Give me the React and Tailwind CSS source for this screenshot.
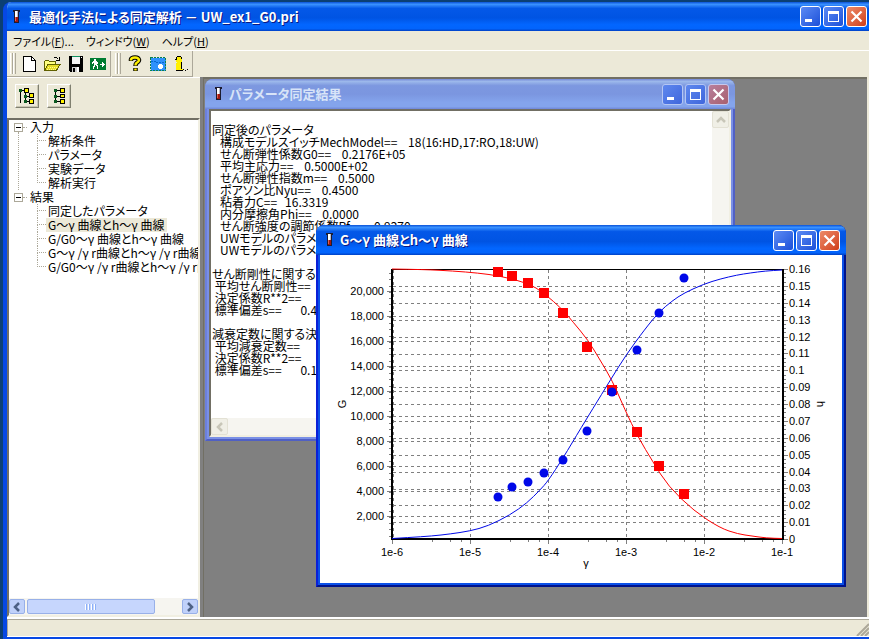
import React, { useState } from 'react';

const menus = [
  { label: 'ファイル', hotkey: 'F', suffix: '...' },
  { label: 'ウィンドウ', hotkey: 'W', suffix: '' },
  { label: 'ヘルプ', hotkey: 'H', suffix: '' },
];

const treeData = [
  { title: '入力', children: ['解析条件', 'パラメータ', '実験データ', '解析実行'] },
  {
    title: '結果',
    children: [
      '同定したパラメータ',
      'G～γ 曲線とh～γ 曲線',
      'G/G0～γ 曲線とh～γ 曲線',
      'G～γ /γ r曲線とh～γ /γ r曲線',
      'G/G0～γ /γ r曲線とh～γ /γ r曲線',
    ],
  },
];

const resultText = `
同定後のパラメータ
   構成モデルスイッチMechModel==    18(16:HD,17:RO,18:UW)
   せん断弾性係数G0==    0.2176E+05
   平均主応力==    0.5000E+02
   せん断弾性指数m==    0.5000
   ポアソン比Nyu==    0.4500
   粘着力C==   16.3319
   内分摩擦角Phi==    0.0000
   せん断強度の調節係数Rf==    0.9270
   UWモデルのパラメータ
   UWモデルのパラメータ

せん断剛性に関する決定係数
 平均せん断剛性==
 決定係数R**2==
 標準偏差s==       0.4

減衰定数に関する決定係数
 平均減衰定数==
 決定係数R**2==
 標準偏差s==       0.1`;

// Points are in the coordinates of the chart's viewBox
const redPoints = [[178, 17], [192, 21], [208, 28], [224, 38], [243, 58], [267, 92], [292, 135], [317, 177], [339, 211], [364, 239]];
const bluePoints = [[178, 242], [192, 232], [208, 227], [224, 218], [243, 205], [267, 176], [292, 137], [317, 95], [339, 58], [364, 23]];
const redCurve = [[72, 14], [105, 14.5], [133, 16], [158, 18], [180, 21], [208, 28], [224, 38], [243, 55], [253, 67], [268, 85], [280, 105], [292, 125], [305, 155], [318, 182], [333, 207], [348, 231], [374, 256], [400, 273], [418, 279], [432, 281], [446, 283], [462, 283.5]];
const blueCurve = [[72, 283.5], [89, 282.5], [112, 281], [130, 279], [150, 276], [168, 271], [190, 260], [207, 248], [220, 235], [228, 226], [243, 203], [252, 188], [261, 173], [272, 155], [291, 124], [306, 100], [325, 74], [339, 57], [352, 46], [364, 38], [384, 29], [400, 24], [417, 20], [430, 18], [445, 16], [462, 15]];

// Smooth curve: quadratic segments through the middle of each pair of points
const toPath = (list) => {
  const last = list[list.length - 1];
  const middle = list.slice(1, -1).map(([x, y], i) => {
    const [nextX, nextY] = list[i + 2];
    return `Q${x} ${y} ${(x + nextX) / 2} ${(y + nextY) / 2}`;
  });
  return `M${list[0].join(' ')}${middle.join('')}L${last.join(' ')}`;
};

const range = (n) => Array.from({ length: n }, (_, i) => i);

const TubeIcon = () => (
  <svg width="8" height="16" viewBox="0 0 8 16" shapeRendering="crispEdges" className="shrink-0">
    <path d="M0 1h7v2h-1v11h-5v-11h-1z" fill="#1c1c30" />
    <path d="M2 2h2v6h-2z" fill="#fff" />
    <path d="M4 2h1v6h-1z" fill="#b9b9c8" />
    <path d="M2 8h3v5h-3z" fill="#a01810" />
    <path d="M2 8h1v4h-1z" fill="#e06050" />
  </svg>
);

const NewIcon = () => (
  <svg width="16" height="16" viewBox="0 0 16 16" shapeRendering="crispEdges">
    <path d="M1.5 .5h8l4 4v11h-12z" fill="#fff" stroke="#000" />
    <path d="M9.5 .5v4h4" fill="none" stroke="#000" />
  </svg>
);

const OpenIcon = () => (
  <svg width="17" height="16" viewBox="0 0 17 16" shapeRendering="crispEdges">
    <path d="M.5 14.5v-9l1-1h3l1 1h6v3" fill="#ffff80" stroke="#606000" />
    <path d="M.5 14.5l3.5-6h12l-3.5 6z" fill="#e6dc28" stroke="#606000" />
    <path d="M4 11.5h9M3 13.5h9" stroke="#fffb90" strokeDasharray="1 1" />
    <path d="M9.5 2.5l1-1h2l2 2M15.5 1v3.500h-3.500" fill="none" stroke="#000" />
  </svg>
);

const SaveIcon = () => (
  <svg width="16" height="16" viewBox="0 0 16 16" shapeRendering="crispEdges">
    <path d="M1 0h14v16h-13l-1-1z" fill="#000" />
    <path d="M4 0h8v8h-8z" fill="#f4f4f4" />
    <path d="M4 0h8v1h-8z" fill="#109060" />
    <path d="M13 1h1v1h-1z" fill="#fff" />
    <path d="M4 11h7v5h-7z" fill="#d0d0d0" />
    <path d="M5 12h2v4h-2z" fill="#000" />
    <path d="M9 11h2v5h-2z" fill="#fff" />
  </svg>
);

const ExitIcon = () => (
  <svg width="17" height="16" viewBox="0 0 17 16" shapeRendering="crispEdges">
    <path d="M0 2h16v12h-16z" fill="#007c30" />
    <path d="M4 3h2v2h-2zM3 5h4v1h1v2h-1v1h1v4h-1v-3h-1v-1h-1v2h-1v2h-1v-3h1v-3h-1v1h-1v-2h1z" fill="#fff" />
    <path d="M10 8h2v-2h1v1h1v1h1v1h-1v1h-1v1h-1v-2h-2z" fill="#fff" />
  </svg>
);

const HelpIcon = () => (
  <svg width="16" height="17" viewBox="0 0 16 17">
    <path d="M4 6V4.500Q4.500 2.500 8 2.500t4 2.500Q12 6.500 9.500 8 8.500 8.800 8.500 11M8.500 13v3" fill="none" stroke="#000" strokeWidth="4.500" />
    <path d="M4 5.500V4.500Q4.500 2.500 8 2.500t4 2.500Q12 6.500 9.500 8 8.500 8.800 8.500 10.500M8.500 13.500v2" fill="none" stroke="#fff000" strokeWidth="2.500" />
  </svg>
);

const MapIcon = () => (
  <svg width="16" height="16" viewBox="0 0 16 16" shapeRendering="crispEdges">
    <path d="M.5 1.500h15v13h-15z" fill="#2f92fc" stroke="#088050" strokeDasharray="2 1" />
    <path d="M1 5.500h5M6 6.500h9" stroke="#0868d0" strokeDasharray="2 1" />
    <path d="M10 8h2v1h1v3h-1v1h-3v-1h-1v-3h1v-1z" fill="#fff" />
  </svg>
);

const GuideIcon = () => (
  <svg width="16" height="16" viewBox="0 0 16 16" shapeRendering="crispEdges">
    <path d="M4 1h4v1h1v4h-1v7h2v1h-7v-7h1v-1h-1v-3h1z" fill="#fff000" />
    <path d="M4 0h4v1h-4zM8 1h1v2h-1zM3 1h1v2h-1zM2 3h2v1h-2zM3 14h7v1h-7zM8 6h1v7h-1zM10 13h1v1h-1zM12 14h1v1h-1zM14 13h1v1h-1z" fill="#000" />
  </svg>
);

const TreeIcon = ({ indent }) => (
  <svg width="16" height="16" viewBox="0 0 16 16" shapeRendering="crispEdges">
    {indent ? (
      <>
        <path d="M1.500 3v12M1 2.500h4M6.500 4v10M6 8.500h4M6 13.500h4" fill="none" stroke="#000" />
        <path d="M0 1h3v3h-3zM5 7h3v3h-3zM5 12h3v3h-3z" fill="#0a5a20" />
        <path d="M5.500 .5h4v4h-4zM10.500 5.500h4v4h-4zM10.500 11.500h4v4h-4z" fill="#fff000" stroke="#000" />
      </>
    ) : (
      <>
        <path d="M4.500 2v12M4 2.500h5M4 8.500h5M4 13.500h5" fill="none" stroke="#000" />
        <path d="M3 1h3v3h-3zM3 7h3v3h-3zM3 12h3v3h-3z" fill="#0a5a20" />
        <path d="M9.500 .5h4v4h-4zM9.500 6.500h4v3h-4zM9.500 11.500h4v4h-4z" fill="#fff000" stroke="#000" />
      </>
    )}
  </svg>
);

const Chevron = ({ dir, color }) => {
  const paths = { left: 'M7 1L3 5l4 4', right: 'M3 1l4 4-4 4', up: 'M1 7l4-4 4 4' };
  return (
    <svg width="10" height="10" viewBox="0 0 10 10">
      <path d={paths[dir]} fill="none" stroke={color} strokeWidth="2.500" />
    </svg>
  );
};

const CaptionButtons = ({ active }) => {
  const blue = active
    ? 'border-white bg-linear-to-br from-[#5c8af4] to-[#1c4fd8]'
    : 'border-[#b4c6f4] bg-linear-to-br from-[#5f88ee] to-[#3f66dc]';
  const red = active
    ? 'border-white bg-linear-to-br from-[#ec8a68] to-[#d03c14]'
    : 'border-[#c8c8ec] bg-linear-to-br from-[#b87f9c] to-[#a8606e]';
  const base = 'flex size-[21px] items-center justify-center rounded-[3px] border';
  return (
    <div className="flex gap-[2px]">
      <button aria-label="最小化" className={`${base} ${blue}`}>
        <svg width="13" height="13" shapeRendering="crispEdges"><path d="M1 9h7v3h-7z" fill="#fff" /></svg>
      </button>
      <button aria-label="最大化" className={`${base} ${blue}`}>
        <svg width="13" height="13" shapeRendering="crispEdges"><path d="M1 1h11v11h-11zM2 4v7h9v-7z" fill="#fff" fillRule="evenodd" /></svg>
      </button>
      <button aria-label="閉じる" className={`${base} ${red}`}>
        <svg width="13" height="13"><path d="M1.500 1.500l10 10M11.500 1.500l-10 10" stroke="#fff" strokeWidth="2.200" /></svg>
      </button>
    </div>
  );
};

const ChildWindow = ({ title, active, className, children }) => (
  <section
    className={`absolute flex h-[362px] w-[530px] flex-col rounded-t-lg border-x-2 border-b-2 px-[2px] pb-[2px] ${
      active
        ? 'border-l-[#0a20d8] border-r-[#00138c] border-b-[#00138c] bg-[#0a50e8]'
        : 'border-l-[#6c80dc] border-r-[#5060c4] border-b-[#5060c4] bg-[#7a90e6]'
    } ${className}`}
  >
    <header
      className={`-mx-1 flex h-[30px] shrink-0 items-center justify-between rounded-t-lg pr-[6px] pl-[10px] ${
        active
          ? 'bg-[linear-gradient(#0a52d8_0%,#3a92ff_8%,#0458e8_22%,#0054e3_55%,#0266ff_78%,#0264fc_92%,#0040c4_100%)]'
          : 'bg-[linear-gradient(#7488d8_0%,#9db9eb_8%,#7d98e0_22%,#7b96e0_50%,#84a4ec_78%,#84a4ec_92%,#6f86d8_100%)]'
      }`}
    >
      <div className="flex items-center gap-[6px]">
        <TubeIcon />
        <h2 className={`text-[13px] font-bold whitespace-pre ${active ? 'text-white [text-shadow:1px_1px_#0a1883]' : 'text-[#d8e4f8]'}`}>{title}</h2>
      </div>
      <CaptionButtons active={active} />
    </header>
    {children}
  </section>
);

const Chart = () => (
  <svg viewBox="0 0 522 328" className="min-h-0 flex-1 bg-white font-['Liberation_Sans','Noto_Sans_CJK_JP',sans-serif] text-[11px]" fill="#000">
    <g stroke="#808080" strokeDasharray="3 3" shapeRendering="crispEdges">
      {range(10).map((i) => (
        <path key={i} d={`M73 ${36.5 + i * 25}H462`} />
      ))}
      {range(15).map((i) => (
        <path key={i} d={`M73 ${Math.round(31 + i * 16.875) + 0.5}H462`} />
      ))}
      {range(6).map((i) => (
        <path key={i} d={`M${72.5 + i * 78} 15V283`} />
      ))}
      <path d="M73.500 15V283" />
    </g>

    {/* Ticks on the three axes */}
    <g stroke="#808080" shapeRendering="crispEdges">
      {range(10).map((i) => (
        <path key={i} d={`M67 ${36.5 + i * 25}h4`} />
      ))}
      {range(43).map((i) => (
        <path key={i} d={`M69 ${Math.round(18 + i * 6.25) + 0.5}h2`} />
      ))}
      {range(17).map((i) => (
        <path key={i} d={`M464 ${Math.round(14 + i * 16.875) + 0.5}h4`} />
      ))}
      {range(64).map((i) => (
        <path key={i} d={`M464 ${Math.round(14 + i * 4.22) + 0.5}h2`} />
      ))}
      {range(6).map((i) => (
        <path key={i} d={`M${72.5 + i * 78} 285v4`} />
      ))}
      {range(5).map((i) => (
        <path key={i} d={`M${112.5 + i * 78} 285v2M${130.5 + i * 78} 285v2M${141.5 + i * 78} 285v2`} />
      ))}
    </g>

    <path d="M71 14.5H464" stroke="#000" shapeRendering="crispEdges" />
    <path d="M72 14V284H463V14" fill="none" stroke="#000" strokeWidth="2" shapeRendering="crispEdges" />

    <path d={toPath(redCurve)} fill="none" stroke="#f00" />
    <path d={toPath(blueCurve)} fill="none" stroke="#0008e8" />
    {redPoints.map(([x, y]) => (
      <rect key={x} x={x - 5} y={y - 5} width="10" height="10" fill="#f00" />
    ))}
    {bluePoints.map(([x, y]) => (
      <circle key={x} cx={x} cy={y} r="4.500" fill="#0008e8" />
    ))}

    {range(10).map((i) => (
      <text key={i} x="64" y={40 + i * 25} textAnchor="end">{(20000 - i * 2000).toLocaleString('en-US')}</text>
    ))}
    {range(17).map((i) => (
      <text key={i} x="469" y={Math.round(18 + i * 16.875)}>{(16 - i) / 100}</text>
    ))}
    {range(6).map((i) => (
      <text key={i} x={72 + i * 78} y="301" textAnchor="middle">{`1e-${6 - i}`}</text>
    ))}
    <text x="266" y="312" textAnchor="middle">γ</text>
    <text transform="translate(26 149) rotate(-90)" textAnchor="middle">G</text>
    <text transform="translate(497 149) rotate(90)" textAnchor="middle">h</text>
  </svg>
);

const ResultPanel = () => (
  <div className="grid min-h-0 flex-1 grid-cols-[1fr_17px] grid-rows-[1fr_17px] border-2 border-t-[#716f64] border-r-[#f1efe2] border-b-[#f1efe2] border-l-[#716f64] bg-white">
    <textarea
      readOnly
      aria-label="パラメータ同定結果"
      value={resultText}
      wrap="off"
      className="resize-none overflow-hidden bg-white pt-px pl-px text-[12px] leading-[12px] whitespace-pre text-black outline-none"
    />
    <div className="bg-[#f6f5f0]">
      <button aria-label="上へ" className="flex size-[17px] items-center justify-center rounded-[2px] border border-[#e3e1d4] bg-[#f0efe6]">
        <Chevron dir="up" color="#c8c6b8" />
      </button>
    </div>
    <div className="bg-[#f6f5f0]">
      <button aria-label="左へ" className="flex size-[17px] items-center justify-center rounded-[2px] border border-[#e3e1d4] bg-[#f0efe6]">
        <Chevron dir="left" color="#c8c6b8" />
      </button>
    </div>
    <div className="bg-[#ece9d8]" />
  </div>
);

const Tree = () => {
  const [selected, setSelected] = useState('G～γ 曲線とh～γ 曲線');

  return (
    <ul className="min-h-0 flex-1 overflow-hidden pl-1 text-[12px] leading-[14px] whitespace-pre">
      {treeData.map((group, index) => (
        <li key={group.title} className="flex">
          <div className="flex w-[10px] shrink-0 flex-col items-center">
            <button aria-label={`${group.title}を閉じる`} className="mt-[3px] flex size-[9px] shrink-0 items-center justify-center border border-[#aca899] bg-white">
              <span className="h-px w-[5px] bg-black" />
            </button>
            {index === 0 && <span className="flex-1 border-l border-dotted border-[#aca899]" />}
          </div>
          <div>
            <div className="flex items-center">
              <span className="w-[4px] border-t border-dotted border-[#aca899]" />
              <button className="h-[14px] px-[3px]" onClick={() => setSelected(group.title)}>{group.title}</button>
            </div>
            <ul className="pl-[14px]">
              {group.children.map((name, i) => (
                <li key={name} className="flex">
                  <span className="flex w-[9px] shrink-0 flex-col">
                    <span className="h-[7px] border-b border-l border-dotted border-[#aca899]" />
                    {i < group.children.length - 1 && <span className="h-[7px] border-l border-dotted border-[#aca899]" />}
                  </span>
                  <button
                    onClick={() => setSelected(name)}
                    className={`h-[14px] pr-[3px] pl-[2px] ${selected === name ? 'bg-[#ece9d8]' : ''}`}
                  >
                    {name}
                  </button>
                </li>
              ))}
            </ul>
          </div>
        </li>
      ))}
    </ul>
  );
};

const ScrollArrow = ({ dir, label }) => (
  <button aria-label={label} className="flex h-[15px] w-4 items-center justify-center rounded-[2px] border border-[#98b0e8] bg-[#c0d1fa]">
    <Chevron dir={dir} color="#4d6185" />
  </button>
);

const ToolBand = ({ items }) => (
  <div className="flex items-center border-r border-b border-[#aca899] pl-[3px]">
    <span className="h-[21px] w-[3px] border-x border-l-white border-r-[#aca899]" />
    <span className="mr-[2px] h-[21px] w-[3px] border-x border-l-white border-r-[#aca899]" />
    {items.map(([label, Icon]) => (
      <button key={label} aria-label={label} className="flex h-[22px] w-[23px] items-center justify-center">
        <Icon />
      </button>
    ))}
  </div>
);

const App = () => {
  const raised = 'flex size-6 items-center justify-center border border-t-white border-r-[#808070] border-b-[#808070] border-l-white shadow-[inset_-1px_-1px_#c8c5b2]';

  return (
    <div className="h-screen bg-[#0b3f74] pt-[2px] pl-[3px] font-['Noto_Sans_CJK_JP',sans-serif] text-black [font-feature-settings:'palt']">
      <div className="flex h-full flex-col overflow-hidden rounded-tl-lg border-b-2 border-l-4 border-[#0648e4] bg-[#ece9d8]">
        {/* Title bar */}
        <header className="-ml-1 flex h-[29px] shrink-0 items-center justify-between bg-[linear-gradient(#0a52d8_0%,#3a92ff_8%,#0458e8_22%,#0054e3_55%,#0266ff_78%,#0264fc_92%,#0040c4_100%)] pr-[2px] pl-[10px]">
          <div className="flex items-center gap-2">
            <TubeIcon />
            <h1 className="text-[13px] font-bold whitespace-pre text-white [text-shadow:1px_1px_#0a1883]">最適化手法による同定解析 － UW_ex1_G0.pri</h1>
          </div>
          <CaptionButtons active />
        </header>

        {/* Menu */}
        <nav className="flex h-[19px] shrink-0 items-center gap-3 pl-[6px] text-[11px]">
          {menus.map((menu) => (
            <button key={menu.hotkey} className="leading-[16px]">
              {menu.label}(<span className="underline">{menu.hotkey}</span>){menu.suffix}
            </button>
          ))}
        </nav>

        {/* Toolbar */}
        <div className="flex h-[27px] shrink-0 gap-px border-t border-white">
          <ToolBand items={[['新規', NewIcon], ['開く', OpenIcon], ['保存', SaveIcon], ['終了', ExitIcon]]} />
          <ToolBand items={[['ヘルプ', HelpIcon], ['画面', MapIcon], ['ガイド', GuideIcon]]} />
        </div>

        <main className="flex min-h-0 flex-1">
          <aside className="flex w-[193px] shrink-0 flex-col border-t border-white">
            <div className="flex h-10 shrink-0 gap-2 pt-[6px] pl-2">
              <button aria-label="すべて展開" className={raised}><TreeIcon indent /></button>
              <button aria-label="すべて閉じる" className={raised}><TreeIcon /></button>
            </div>
            <div className="flex min-h-0 flex-1 flex-col border-2 border-t-[#716f64] border-r-[#f1efe2] border-b-[#f1efe2] border-l-[#716f64] bg-white">
              <Tree />
              <div className="flex h-[17px] shrink-0 items-center bg-[#f6f5f0]">
                <ScrollArrow dir="left" label="左へスクロール" />
                <div className="flex flex-1 px-[2px]">
                  <div className="flex h-[15px] w-5/6 items-center justify-center gap-px rounded-[2px] border border-[#98b0e8] bg-[#c6d6fd]">
                    {range(4).map((i) => (
                      <span key={i} className="h-[6px] w-[2px] border-l border-white bg-[#8cb0f8]" />
                    ))}
                  </div>
                </div>
                <ScrollArrow dir="right" label="右へスクロール" />
              </div>
            </div>
          </aside>

          <div className="w-[3px] shrink-0 bg-[#808080]" />

          {/* MDI area */}
          <div className="relative mr-[2px] flex-1 overflow-hidden border-t-2 border-l border-[#716f64] bg-[#808080]">
            <ChildWindow title="パラメータ同定結果" active={false} className="top-0 left-px">
              <ResultPanel />
            </ChildWindow>
            <ChildWindow title="G～γ 曲線とh～γ 曲線" active className="top-[146px] left-[112px]">
              <Chart />
            </ChildWindow>
          </div>
        </main>

        {/* Status bar */}
        <footer className="flex h-[20px] shrink-0 items-end justify-end border-t-2 border-b border-white">
          <div className="flex h-full w-full items-end justify-end border-t border-l border-[#aca899]">
            <svg width="13" height="13" stroke="#aca899" strokeWidth="2">
              <path d="M1 13L13 1M5 13l8-8M9 13l4-4" />
            </svg>
          </div>
        </footer>
      </div>
    </div>
  );
};

export default App;
